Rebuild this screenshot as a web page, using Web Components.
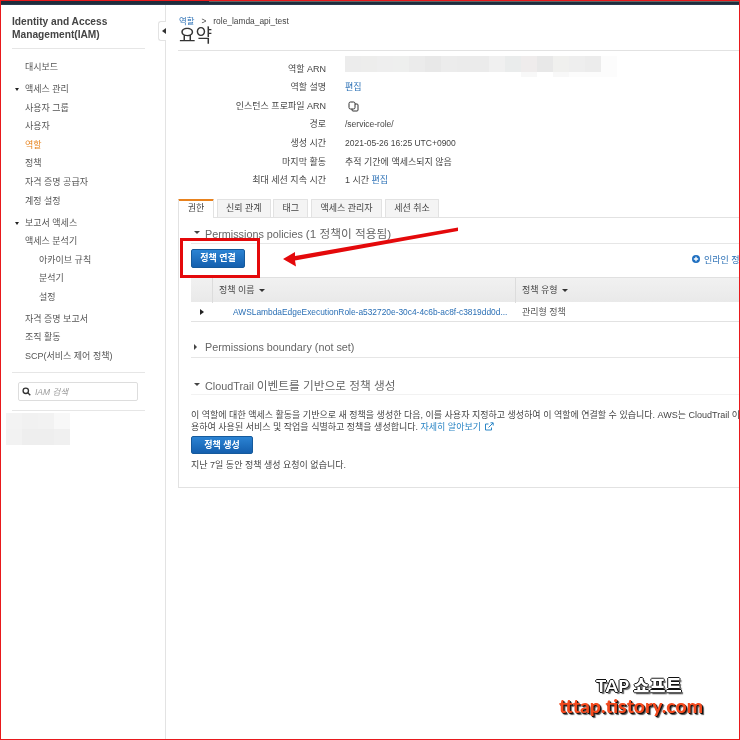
<!DOCTYPE html>
<html lang="ko">
<head>
<meta charset="utf-8">
<title>IAM role summary</title>
<style>
    html, body { margin: 0; padding: 0; background: #fff; }
    body {
        width: 740px;
        height: 740px;
        overflow: hidden;
        font-family: "Liberation Sans", "Noto Sans CJK KR", sans-serif;
        font-size: 9px;
        color: #444;
    }
</style>
</head>
<body>
<iam-app>
    <iam-sidebar slot="side"></iam-sidebar>
    <role-page slot="main"></role-page>
</iam-app>

<script>
// small helper, every element here only needs one static shadow root
class Base extends HTMLElement {
    connectedCallback() {
        if (this.shadowRoot) return;
        this.attachShadow({ mode: 'open' });
        this.shadowRoot.innerHTML = this.render();
    }
}

class IamApp extends Base {
    render() {
        return `
        <style>
            :host { display: flex; flex-direction: column; width: 740px; height: 740px; box-sizing: border-box; border: 1px solid #e8191c; position: relative; overflow: hidden; background: #fff; }
            .top { height: 4px; flex: none; background: linear-gradient(#666, #666) 208px 0 / 100% 1px no-repeat, linear-gradient(#1f2d3d 70%, #34475c); }
            .body { flex: 1; display: flex; min-height: 0; filter: blur(0.35px); }
            .mark { position: absolute; left: 558px; top: 674px; width: 150px; font-family: "Lato", "Noto Sans CJK KR", sans-serif; font-weight: 900; white-space: nowrap; filter: blur(0.3px); }
            .mark div:first-child { font-size: 17px; line-height: 21px; margin-left: 37px; color: #fff; letter-spacing: 0.6px; text-shadow: 1px 0 #111, -1px 0 #111, 0 1px #111, 0 -1px #111, 2px 2px 1px #666; }
            .mark div:last-child { font-size: 19.3px; line-height: 20px; color: #f4491d; text-shadow: 1px 1px #111, 2px 2px 1px #555; }
        </style>
        <div class="top"></div>
        <div class="body"><slot name="side"></slot><slot name="main"></slot></div>
        <div class="mark"><div>TAP 쇼프트</div><div>tttap.tistory.com</div></div>`;
    }
}

class IamSidebar extends Base {
    render() {
        return `
        <style>
            :host { display: block; flex: none; width: 165px; height: 100%; box-sizing: border-box; border-right: 1px solid #e3e3e3; position: relative; }
            h1 { padding: 10px 0 7px; margin: 0 20px 0 11px; font-size: 10.2px; line-height: 13px; font-weight: 700; color: #444; border-bottom: 1px solid #e6e6e6; }
            ul { list-style: none; margin: 0; padding: 0; }
            .nav { padding: 9px 0 6px 24px; margin: 0; }
            li { line-height: 18.6px; height: 18.6px; white-space: nowrap; color: #555; position: relative; }
            li.head::before { content: ""; position: absolute; left: -10px; top: 8px; border: 2.5px solid transparent; border-top: 3px solid #222; border-bottom: 0; }
            li.gap { margin-top: 3.4px; }
            li.sub { padding-left: 14px; }
            li.on { color: #e7841f; }
            .sep { margin: 0 20px 0 11px; border-top: 1px solid #e6e6e6; }
            .search { margin: 9px 27px 9px 17px; height: 19px; box-sizing: border-box; border: 1px solid #ddd; border-radius: 2px; display: flex; align-items: center; gap: 4px; padding-left: 3px; font-style: italic; font-size: 8.5px; color: #999; }
            svg { display: block; }
            .toggle { position: absolute; right: -1px; top: 16px; width: 8px; height: 20px; box-sizing: border-box; border: 1px solid #e3e3e3; border-right: 0; border-radius: 3px 0 0 3px; background: #fff; display: flex; align-items: center; justify-content: flex-end; }
            .toggle i { border: 3px solid transparent; border-right: 4px solid #333; border-left: 0; }
            blur-block { margin: 2px 0 0 5px; }
        </style>
        <h1>Identity and Access Management(IAM)</h1>
        <ul class="nav">
            <li>대시보드</li>
            <li class="head gap">액세스 관리</li>
            <li>사용자 그룹</li>
            <li>사용자</li>
            <li class="on">역할</li>
            <li>정책</li>
            <li>자격 증명 공급자</li>
            <li>계정 설정</li>
            <li class="head gap">보고서 액세스</li>
            <li>액세스 분석기</li>
            <li class="sub">아카이브 규칙</li>
            <li class="sub">분석기</li>
            <li class="sub">설정</li>
            <li class="gap">자격 증명 보고서</li>
            <li>조직 활동</li>
            <li>SCP(서비스 제어 정책)</li>
        </ul>
        <div class="sep"></div>
        <div class="search">
            <svg width="9" height="9" viewBox="0 0 10 10" fill="none" stroke="#333" stroke-width="1.5"><circle cx="4.2" cy="4.2" r="3"/><path d="M6.4 6.4 9.2 9.2"/></svg>
            <span>IAM 검색</span>
        </div>
        <div class="sep"></div>
        <blur-block size="16" cells="#f3f3f3,#f1f1f1,#f2f2f2,#f8f8f8;#f2f2f2,#eeeeee,#eeeeee,#f0f0f0"></blur-block>
        <div class="toggle"><i></i></div>`;
    }
}

// the pixelated blocks that hide account ids in the screenshot
class BlurBlock extends Base {
    render() {
        const size = this.getAttribute('size') || 16;
        const rows = this.getAttribute('cells').split(';').map(r => {
            const cells = r.split(',').map(c => `<b style="background:${c}"></b>`).join('');
            return `<div>${cells}</div>`;
        }).join('');
        return `
        <style>
            :host { display: block; overflow: hidden; }
            div { display: flex; }
            b { display: block; flex: none; width: ${size}px; height: ${size}px; }
        </style>${rows}`;
    }
}

class RolePage extends Base {
    render() {
        return `
        <style>
            :host { display: block; flex: 1; min-width: 0; padding-left: 12px; overflow: hidden; color: #444; position: relative; }
            a, .link { color: #2a6fb5; text-decoration: none; }
            .crumb { margin: 11px 0 0 1px; height: 10px; line-height: 10px; display: flex; gap: 7px; white-space: nowrap; font-size: 8.4px; }
            h2 { margin: 0 0 0 1px; font-size: 18px; font-weight: 400; line-height: 20px; color: #333; height: 20px; }
            .rule { border-top: 1px solid #e2e2e2; margin-top: 4px; }
            .rows { padding-top: 8.7px; position: relative; }
            .tabs { margin-top: 9px; }
            .lat { font-size: 8.5px; }
        </style>
        <div class="crumb"><a>역할</a><span>&gt;</span><span>role_lamda_api_test</span></div>
        <h2>요약</h2>
        <div class="rule"></div>
        <div class="rows">
            <summary-row label="역할 ARN"><blur-block size="16" style="margin-top:-3.7px;height:21px;width:272px" cells="#ececec,#ededec,#eeeeee,#eeefee,#ebebeb,#e8e8e8,#ececec,#ebebeb,#ebebeb,#f0f0f0,#eaecec,#efecec,#e8e8e8,#f0f0ee,#eeeeee,#ececec,#fcfcfc;#fff,#fff,#fff,#fff,#fff,#fff,#fff,#fff,#fff,#fff,#fff,#f8f8f8,#fff,#f8f8f8,#fcfcfc,#fcfcfc,#fcfcfc"></blur-block></summary-row>
            <summary-row label="역할 설명"><a class="link">편집</a></summary-row>
            <summary-row label="인스턴스 프로파일 ARN"><svg style="margin:4px 0 0 3px;display:block" width="11" height="11" viewBox="0 0 11 11" fill="#fff" stroke="#333" stroke-width="1"><rect x="4" y="3" width="6" height="7" rx="1"/><rect x="1" y="1" width="6" height="7" rx="1.5"/></svg></summary-row>
            <summary-row label="경로"><span class="lat">/service-role/</span></summary-row>
            <summary-row label="생성 시간"><span class="lat">2021-05-26 16:25 UTC+0900</span></summary-row>
            <summary-row label="마지막 활동">추적 기간에 액세스되지 않음</summary-row>
            <summary-row label="최대 세션 지속 시간">1 시간 <a class="link">편집</a></summary-row>
        </div>
        <role-tabs class="tabs"></role-tabs>
        <policy-panel></policy-panel>`;
    }
}

class SummaryRow extends Base {
    render() {
        return `
        <style>
            :host { display: grid; grid-template-columns: 148px 1fr; column-gap: 19px; height: 18.6px; line-height: 18.6px; white-space: nowrap; }
            .k { text-align: right; color: #444; }
            .v { color: #444; }
        </style>
        <div class="k">${this.getAttribute('label')}</div>
        <div class="v"><slot></slot></div>`;
    }
}

class RoleTabs extends Base {
    render() {
        const names = ['권한', '신뢰 관계', '태그', '액세스 관리자', '세션 취소'];
        const widths = [36, 54, 35, 71, 54.5];
        const tabs = names.map((n, i) => `<div class="tab ${i === 0 ? 'on' : ''}" style="width:${widths[i]}px">${n}</div>`).join('');
        return `
        <style>
            :host { display: flex; gap: 2.7px; height: 18px; position: relative; z-index: 1; }
            .tab { box-sizing: border-box; height: 18px; line-height: 17px; text-align: center; background: #f4f4f4; border: 1px solid #e2e2e2; border-bottom: 0; color: #444; border-radius: 1px 1px 0 0; }
            .tab.on { height: 19px; background: #fff; border-top: 1px solid #e8821e; box-shadow: inset 0 1px #e8821e; }
        </style>${tabs}`;
    }
}

class SectionHead extends Base {
    render() {
        const open = this.hasAttribute('open');
        return `
        <style>
            :host { display: flex; align-items: center; gap: 5px; box-sizing: border-box; white-space: nowrap; font-size: 10.8px; color: #666; border-bottom: 1px solid #e6e6e6; }
            i { flex: none; display: block; box-sizing: content-box; width: 0; height: 0; }
            i.open { border: 3px solid transparent; border-top: 3px solid #444; border-bottom: 0; margin: 0 0 0 3px; }
            i.shut { border: 3px solid transparent; border-left: 3px solid #444; border-right: 0; margin: 0 3px 0 3px; }
        </style>
        <i class="${open ? 'open' : 'shut'}"></i><span><slot></slot></span>`;
    }
}

class AwsButton extends Base {
    render() {
        return `
        <style>
            :host { display: inline-block; box-sizing: border-box; text-align: center; color: #fff; font-weight: 700; border: 1px solid #155a9c; border-radius: 2px; background: linear-gradient(#2b83d3, #145fae); }
        </style><slot></slot>`;
    }
}

class PolicyTable extends Base {
    render() {
        return `
        <style>
            :host { display: block; width: 560px; }
            .row { display: grid; grid-template-columns: 21px 303px 1fr; white-space: nowrap; }
            .row.hd { height: 25px; line-height: 25px; background: linear-gradient(#f1f1f1, #e9e9e9); border-top: 1px solid #e0e0e0; box-sizing: border-box; font-weight: 400; color: #444; }
            .row.hd div + div { border-left: 1px solid #dcdcdc; padding-left: 6px; }
            .row.hd span { display: inline-block; margin-left: 4px; vertical-align: 1px; border: 3px solid transparent; border-top: 3px solid #333; border-bottom: 0; }
            .row.bd { height: 20px; line-height: 20px; border-bottom: 1px solid #e2e2e2; box-sizing: border-box; color: #555; }
            .arrow { position: relative; }
            .arrow i { position: absolute; left: 9px; top: 7px; border: 3px solid transparent; border-left: 4px solid #222; border-right: 0; }
            a { color: #2a6fb5; padding-left: 21px; display: block; font-size: 8.4px; }
            .type { padding-left: 7px; }
        </style>
        <div class="row hd"><div></div><div>정책 이름<span></span></div><div>정책 유형<span></span></div></div>
        <div class="row bd"><div class="arrow"><i></i></div><a>AWSLambdaEdgeExecutionRole-a532720e-30c4-4c6b-ac8f-c3819dd0d...</a><div class="type">관리형 정책</div></div>`;
    }
}

class PolicyPanel extends Base {
    render() {
        return `
        <style>
            :host { display: block; width: 580px; height: 271px; box-sizing: border-box; border: 1px solid #e2e2e2; padding: 0 0 0 12px; position: relative; }
            section-head { height: 26px; padding-top: 4px; }
            .ko { font-size: 11.7px; }
            .bar { height: 33px; display: flex; align-items: flex-start; justify-content: space-between; white-space: nowrap; }
            aws-button.attach { width: 54px; height: 19px; line-height: 17px; margin-top: 5px; }
            .inline { margin-top: 9px; margin-right: -10px; display: flex; align-items: center; gap: 4px; color: #2a6fb5; }
            .inline svg { display: block; }
            section-head.boundary { margin-top: 16px; height: 20px; padding-top: 0; }
            section-head.trail { margin-top: 17px; height: 20px; padding-top: 0; border-bottom-color: #f2f2f2; }
            p { margin: 14px 0 0; line-height: 12.2px; white-space: nowrap; color: #444; }
            a { color: #2a85c5; }
            a svg { vertical-align: -1px; margin-left: 2px; }
            aws-button.create { width: 62px; height: 18px; line-height: 16px; margin-top: 3px; display: block; }
            p.none { margin: 6px 0 0; line-height: 11px; }
            .tag { position: absolute; left: 0.5px; top: 20px; width: 80px; height: 40px; box-sizing: border-box; border: 3.5px solid #e4090b; }
            .arrow { position: absolute; left: 100px; top: 8px; overflow: visible; }
        </style>
        <section-head open>Permissions policies <span class="ko">(1 정책이 적용됨)</span></section-head>
        <div class="bar">
            <aws-button class="attach">정책 연결</aws-button>
            <div class="inline"><svg width="8" height="8" viewBox="0 0 8 8"><circle cx="4" cy="4" r="4" fill="#1f6fc0"/><path d="M4 1.8v4.4M1.8 4h4.4" stroke="#fff" stroke-width="1.3"/></svg><span>인라인 정책 추가</span></div>
        </div>
        <policy-table></policy-table>
        <section-head class="boundary">Permissions boundary (not set)</section-head>
        <section-head class="trail" open>CloudTrail <span class="ko">이벤트를 기반으로 정책 생성</span></section-head>
        <p>이 역할에 대한 액세스 활동을 기반으로 새 정책을 생성한 다음, 이를 사용자 지정하고 생성하여 이 역할에 연결할 수 있습니다. AWS는 CloudTrail 이벤트를 사용<br>용하여 사용된 서비스 및 작업을 식별하고 정책을 생성합니다. <a>자세히 알아보기 <svg width="9" height="9" viewBox="0 0 9 9" fill="none" stroke="#2a85c5" stroke-width="1"><path d="M6.5 5.5v2.5h-6v-6h3"/><path d="M3.5 5.5 8 1M5.5 .8H8.2V3.5"/></svg></a></p>
        <aws-button class="create">정책 생성</aws-button>
        <p class="none">지난 7일 동안 정책 생성 요청이 없습니다.</p>
        <div class="tag"></div>
        <svg class="arrow" width="190" height="50" viewBox="0 0 190 50"><path d="M179 1.5 179 5 16 34.5 17 40.5 4 33 16 26 16 30Z" fill="#e4090b"/></svg>`;
    }
}

customElements.define('iam-app', IamApp);
customElements.define('iam-sidebar', IamSidebar);
customElements.define('blur-block', BlurBlock);
customElements.define('role-page', RolePage);
customElements.define('summary-row', SummaryRow);
customElements.define('role-tabs', RoleTabs);
customElements.define('section-head', SectionHead);
customElements.define('aws-button', AwsButton);
customElements.define('policy-table', PolicyTable);
customElements.define('policy-panel', PolicyPanel);
</script>
</body>
</html>
